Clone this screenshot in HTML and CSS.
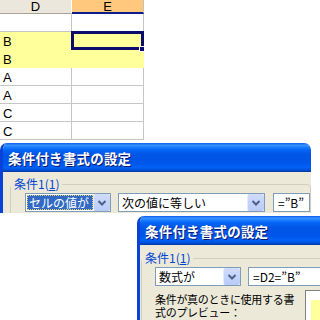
FILE: index.html
```html
<!DOCTYPE html>
<html lang="ja">
<head>
    <meta charset="UTF-8">
    <title>条件付き書式の設定</title>
    <link rel="stylesheet" href="styles.css">
</head>
<body>

    <div class="sheet">
        <div class="hd">D</div>
        <div class="hd hd-on">E</div>

        <div class="cell"></div><div class="cell"></div>
        <div class="cell hl">B</div><div class="cell hl sel"></div>
        <div class="cell hl">B</div><div class="cell hl"></div>
        <div class="cell">A</div><div class="cell"></div>
        <div class="cell">A</div><div class="cell"></div>
        <div class="cell">C</div><div class="cell"></div>
        <div class="cell">C</div><div class="cell"></div>
    </div>

    <div class="dlg dlg-one">
        <div class="title">条件付き書式の設定</div>
        <div class="body">
            <fieldset class="group">
                <legend>条件1(<u>1</u>)</legend>
                <div class="row">
                    <div class="combo c-op">
                        <span class="val picked">セルの値が</span>
                        <span class="drop"><svg width="16" height="17" viewBox="0 0 16 17"><path d="M4.5 7 L8 10.5 L11.5 7" fill="none" stroke="#4d6185" stroke-width="2"/></svg></span>
                    </div>
                    <div class="combo c-cmp">
                        <span class="val">次の値に等しい</span>
                        <span class="drop"><svg width="16" height="17" viewBox="0 0 16 17"><path d="M4.5 7 L8 10.5 L11.5 7" fill="none" stroke="#4d6185" stroke-width="2"/></svg></span>
                    </div>
                    <div class="field">=”B”</div>
                </div>
            </fieldset>
        </div>
    </div>

    <div class="dlg dlg-two">
        <div class="title">条件付き書式の設定</div>
        <div class="body">
            <fieldset class="group">
                <legend>条件1(<u>1</u>)</legend>
                <div class="row">
                    <div class="combo c-op">
                        <span class="val">数式が</span>
                        <span class="drop"><svg width="16" height="17" viewBox="0 0 16 17"><path d="M4.5 7 L8 10.5 L11.5 7" fill="none" stroke="#4d6185" stroke-width="2"/></svg></span>
                    </div>
                    <div class="field">=D2=”B”</div>
                </div>
                <div class="preview-row">
                    <div class="note">条件が真のときに使用する書式のプレビュー：</div>
                    <div class="preview"><div class="swatch"></div></div>
                </div>
            </fieldset>
        </div>
    </div>

</body>
</html>
```

FILE: styles.css
```css
body {
    margin: 0;
    width: 320px;
    height: 320px;
    overflow: hidden;
    position: relative;
    background: #fff;
    font-family: "Noto Sans CJK JP", "Liberation Sans", sans-serif;
}

/* spreadsheet */
.sheet {
    display: grid;
    grid-template-columns: 72px 72px;
    grid-template-rows: 14px repeat(7, 18px);
    width: 144px;
    font-family: "Liberation Sans", "Noto Sans CJK JP", sans-serif;
    font-size: 13px;
}

.hd {
    background: #ebe7dc;
    border-right: 1px solid #fff;
    border-bottom: 1px solid #a8a495;
    box-sizing: border-box;
    text-align: center;
    line-height: 14px;
    color: #000;
}

.hd-on {
    background: #ffc87c;
    border-right: 1px solid #c8c4b4;
    border-bottom: 2px solid #0a1e8c;
}

.cell {
    border-right: 1px solid #c6c6c6;
    border-bottom: 1px solid #c6c6c6;
    box-sizing: border-box;
    padding-left: 3px;
    line-height: 19px;
}

.cell.hl {
    background: #ffff9c;
    border-color: #ffff9c;
}

.sel {
    position: relative;
}

.sel::after {
    content: "";
    position: absolute;
    left: -1px;
    top: -1px;
    right: -1px;
    bottom: -1px;
    border: 3px solid #0c0c6e;
}

.sel::before {
    content: "";
    position: absolute;
    right: -2px;
    bottom: -3px;
    width: 4px;
    height: 4px;
    background: #0c0c6e;
    border: 1px solid #fff;
    z-index: 1;
}

/* dialogs */
.dlg {
    position: absolute;
    background: #ece9d8;
    border-left: 3px solid #0842d8;
    border-radius: 7px 7px 0 0;
    overflow: hidden;
    font-size: 12px;
    color: #000;
}

.dlg-one {
    left: 0;
    top: 143px;
    width: 308px;
    height: 70px;
}

.dlg-two {
    left: 137px;
    top: 216px;
    width: 200px;
    height: 120px;
}

.title {
    height: 29px;
    margin-left: -3px;
    padding-left: 8px;
    box-sizing: border-box;
    background: linear-gradient(#0a5ef2 0%, #3a93ff 8%, #1a7ffe 14%, #0564f4 24%, #0055e5 40%, #0056ea 70%, #0161f8 84%, #0050d6 93%, #0036a0 100%);
    color: #fff;
    font-weight: bold;
    font-size: 13.5px;
    letter-spacing: 0.2px;
    line-height: 31px;
    text-shadow: 1px 1px 0 #0a1870;
}

.dlg-one .body {
    padding: 5px 0 0 7px;
}

.dlg-two .body {
    padding: 6px 0 0 1px;
}

.group {
    margin: 0;
    padding: 0 0 20px 0;
    border: 1px solid #d0d0bf;
    border-radius: 4px;
}

.group legend {
    padding: 0 3px;
    margin: 0;
    color: #0046d5;
    font-size: 12px;
    line-height: 14px;
}

.row {
    display: flex;
    margin: 2px 0 0 14px;
}

.dlg-two .row {
    margin: 2px 0 0 13px;
}

.combo {
    display: flex;
    align-items: center;
    height: 19px;
    background: #fff;
    border: 1px solid #7f9db9;
    box-sizing: border-box;
    margin-right: 7px;
}

.c-op {
    width: 86px;
}

.c-cmp {
    width: 147px;
    margin-right: 8px;
}

.val {
    flex: 1;
    height: 15px;
    margin-left: 1px;
    padding-left: 2px;
    line-height: 15px;
    white-space: nowrap;
    overflow: hidden;
}

.val.picked {
    background: #316ac5;
    color: #fff;
    outline: 1px dotted #e8d070;
    outline-offset: -1px;
}

.drop {
    width: 16px;
    height: 17px;
    background: linear-gradient(#d0dcfc, #b8cbf8);
    border-left: 1px solid #e4ecfe;
    border-radius: 2px;
    display: flex;
}

.field {
    flex: 1;
    height: 19px;
    background: #fff;
    border: 1px solid #7f9db9;
    box-sizing: border-box;
    padding-left: 4px;
    line-height: 17px;
    white-space: nowrap;
}

.preview-row {
    display: flex;
    margin: 4px 0 0 13px;
    gap: 10px;
}

.note {
    width: 140px;
    padding-top: 3px;
    font-size: 11px;
    letter-spacing: -0.3px;
    line-height: 12.5px;
}

.preview {
    width: 60px;
    height: 40px;
    background: #fff;
    border: 1px solid #808080;
    padding: 9px 0 0 5px;
    box-sizing: border-box;
}

.swatch {
    height: 30px;
    background: #ffff9c;
}
```
